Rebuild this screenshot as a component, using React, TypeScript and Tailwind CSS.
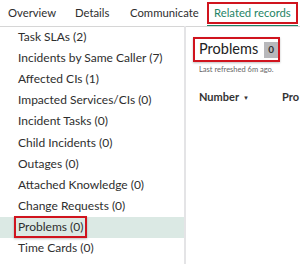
import React from 'react'

const TABS = [
  { label: 'Overview', w: 'w-[67px]' },
  { label: 'Details', w: 'w-[55px]' },
  { label: 'Communicate', w: 'w-[77px]' },
]

const LISTS = [
  'Task SLAs (2)',
  'Incidents by Same Caller (7)',
  'Affected CIs (1)',
  'Impacted Services/CIs (0)',
  'Incident Tasks (0)',
  'Child Incidents (0)',
  'Outages (0)',
  'Attached Knowledge (0)',
  'Change Requests (0)',
  'Problems (0)',
  'Time Cards (0)',
]

export default function App() {
  return (
    <div className="w-[300px] h-[264px] overflow-hidden bg-white text-[#2e2e2e] font-['Lato','Liberation_Sans',sans-serif] flex flex-col">
      {/* Tabs */}
      <div className="h-[27px] shrink-0 border-b border-[#d6d6d6] flex items-end pl-[8px] text-[11.3px] whitespace-nowrap">
        {TABS.map(t => (
          <div key={t.label} className={`${t.w} shrink-0 h-[26px] flex items-center`}>
            {t.label}
          </div>
        ))}
        <div className="h-[27px] shrink-0 flex flex-col">
          <div className="mt-[3px] h-[22px] px-[5px] border-2 border-[#d0141e] text-[#1f8466] flex items-center">
            Related records
          </div>
          <div className="h-px mt-[1px] bg-[#1f8466]" />
        </div>
      </div>

      <div className="flex flex-1 min-h-0">
        {/* Left list */}
        <div className="w-[186px] shrink-0 border-r-2 border-[#e4e4e6] text-[12px] -mt-[1px]">
          {LISTS.map(l => {
            const sel = l === 'Problems (0)'
            return (
              <div
                key={l}
                className={`h-[21.2px] flex items-center pl-[18px] whitespace-nowrap ${sel ? 'bg-[#dbe9e4]' : ''}`}
              >
                {sel ? (
                  <span className="-ml-[4px] px-[2px] h-[22px] flex items-center border-2 border-[#d0141e] shadow-[0_1px_2px_rgba(0,0,0,0.25)]">
                    {l}
                  </span>
                ) : (
                  l
                )}
              </div>
            )
          })}
        </div>

        {/* Right panel */}
        <div className="flex-1 pl-[7px] pt-[10px]">
          <div className="w-[87px] h-[25px] border-2 border-[#d0141e] shadow-[0_1px_2px_rgba(0,0,0,0.25)] flex items-center pl-[4px] gap-[6px]">
            <span className="text-[14.5px] text-[#222] leading-none">Problems</span>
            <span className="w-[15px] h-[16px] bg-[#b8b8bb] text-[10px] font-bold text-[#333] flex items-center justify-center">
              0
            </span>
          </div>
          <div className="text-[7.5px] text-[#666] mt-[2px] pl-[6px] whitespace-nowrap">Last refreshed 6m ago.</div>
          <div className="mt-[14px] flex items-center text-[11px] font-bold text-[#333] pl-[6px] whitespace-nowrap">
            <span>Number</span>
            <span className="ml-[4px] text-[6px]">▼</span>
            <span className="ml-[33px]">Pro</span>
          </div>
        </div>
      </div>
    </div>
  )
}
